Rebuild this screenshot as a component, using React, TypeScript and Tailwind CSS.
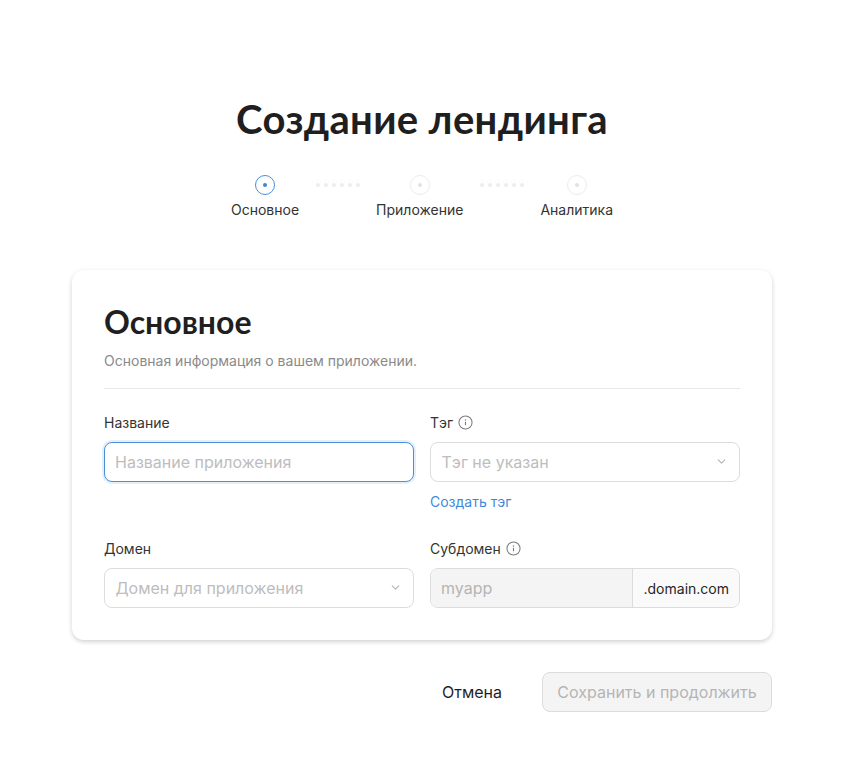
import React from 'react';
import { ChevronDown } from 'lucide-react';

const steps = [
  { label: 'Основное', active: true },
  { label: 'Приложение', active: false },
  { label: 'Аналитика', active: false },
];

const InfoIcon: React.FC = () => (
  <svg width="15" height="15" viewBox="0 0 16 16" fill="none" className="text-[#7a7a7a]">
    <circle cx="8" cy="8" r="7" stroke="currentColor" strokeWidth="1.1" />
    <circle cx="8" cy="5.2" r="0.8" fill="currentColor" />
    <path d="M8 7.3v3.6" stroke="currentColor" strokeWidth="1.2" />
  </svg>
);

const Stepper: React.FC = () => (
  <div className="mt-[32px] flex justify-center">
    {steps.map((step, idx) => (
      <React.Fragment key={step.label}>
        {idx > 0 && (
          <div className="flex h-[20px] w-[77px] items-center justify-center gap-[4px]">
            {[0, 1, 2, 3, 4, 5].map((d) => (
              <span key={d} className="h-[4px] w-[4px] rounded-full bg-[#ececec]" />
            ))}
          </div>
        )}
        <div className="flex flex-col items-center">
          <div
            className={
              step.active
                ? 'flex h-[20px] w-[20px] items-center justify-center rounded-full border border-[#4a90d9]'
                : 'flex h-[20px] w-[20px] items-center justify-center rounded-full border border-[#ececec]'
            }
          >
            <span
              className={
                step.active
                  ? 'h-[4px] w-[4px] rounded-full bg-[#3d85d8]'
                  : 'h-[4px] w-[4px] rounded-full bg-[#e2e2e2]'
              }
            />
          </div>
          <span className="mt-[6px] text-[14px] leading-[18px] text-[#333333]">{step.label}</span>
        </div>
      </React.Fragment>
    ))}
  </div>
);

const Label: React.FC<{ text: string; info?: boolean }> = ({ text, info }) => (
  <div className="flex h-[20px] items-center gap-[5px] text-[14px] text-[#333333]">
    <span>{text}</span>
    {info && <InfoIcon />}
  </div>
);

const SelectBox: React.FC<{ placeholder: string }> = ({ placeholder }) => (
  <div className="mt-[10px] flex h-[40px] items-center justify-between rounded-[8px] border border-[#dcdcdc] bg-white pl-[10.5px] pr-[11px]">
    <span className="text-[16px] text-[#bdbdbd]">{placeholder}</span>
    <ChevronDown size={13} strokeWidth={2} className="mb-[2px] text-[#b4b4b4]" />
  </div>
);

export default function App() {
  return (
    <div className="h-[784px] w-[844px] bg-white font-['Inter',sans-serif]">
      <div className="px-[72px] pt-[95px]">
        <h1 className="text-center font-['Lato',sans-serif] text-[40px] font-bold leading-[48px] tracking-[0.35px] text-[#1f1f1f]">
          Создание лендинга
        </h1>
        <Stepper />

        <div className="mt-[51px] h-[370px] rounded-[12px] bg-white px-[32px] pt-[31px] shadow-[0_2px_4px_rgba(0,0,0,0.16),0_0_8px_rgba(0,0,0,0.03)]">
          <h2 className="font-['Lato',sans-serif] text-[32px] font-bold leading-[42px] text-[#1f1f1f]">Основное</h2>
          <p className="mt-[8px] text-[14px] leading-[20px] text-[#8a8a8a]">Основная информация о вашем приложении.</p>
          <div className="mt-[17px] h-px bg-[#e8e8e8]" />

          <div className="mt-[23px] grid grid-cols-2 gap-x-[16px]">
            <div>
              <Label text="Название" />
              <input
                placeholder="Название приложения"
                className="mt-[10px] h-[40px] w-full rounded-[8px] border border-[#4a90d9] bg-white px-[10px] text-[16px] shadow-[0_0_0_2px_#e3f0fb] outline-none placeholder:text-[#bdbdbd]"
              />
            </div>
            <div>
              <Label text="Тэг" info />
              <SelectBox placeholder="Тэг не указан" />
              <a className="mt-[11px] block text-[14px] leading-[18px] text-[#3f8ad8]">Создать тэг</a>
            </div>
            <div className="mt-[27px]">
              <Label text="Домен" />
              <SelectBox placeholder="Домен для приложения" />
            </div>
            <div className="mt-[27px]">
              <Label text="Субдомен" info />
              <div className="mt-[10px] flex h-[40px] overflow-hidden rounded-[8px] border border-[#dcdcdc]">
                <input
                  disabled
                  placeholder="myapp"
                  className="min-w-0 flex-1 bg-[#f4f4f4] px-[10px] text-[16px] placeholder:text-[#b5b5b5]"
                />
                <div className="flex items-center border-l border-[#dcdcdc] bg-[#fafafa] pl-[11px] pr-[10px] text-[14px] text-[#262626]">
                  .domain.com
                </div>
              </div>
            </div>
          </div>
        </div>

        <div className="mt-[32px] flex items-center justify-end">
          <button className="mr-[40px] text-[16px] text-[#1f1f1f]">Отмена</button>
          <button
            disabled
            className="h-[40px] w-[230px] rounded-[8px] border border-[#dcdcdc] bg-[#f4f4f4] text-[16px] text-[#b5b5b5]"
          >
            Сохранить и продолжить
          </button>
        </div>
      </div>
    </div>
  );
}
